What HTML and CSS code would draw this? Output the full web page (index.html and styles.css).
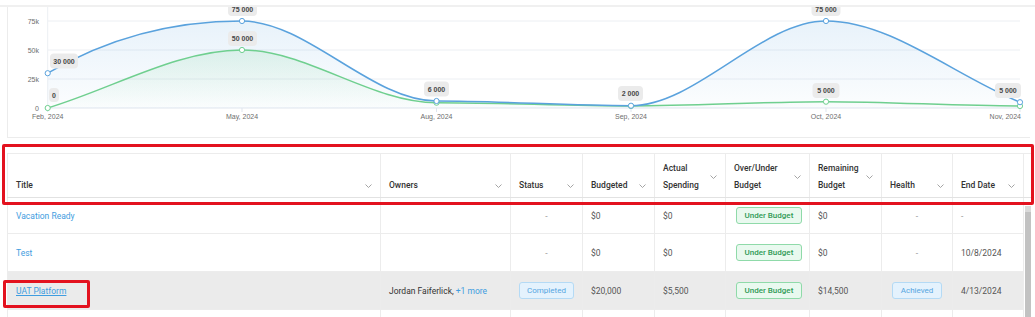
FILE: index.html
```html
<!DOCTYPE html>
<html lang="en">
<head>
    <meta charset="UTF-8">
    <title>Projects Budget</title>
    <link rel="stylesheet" href="styles.css">
</head>
<body>
    <div class="top-strip"></div>

    <!-- Budget vs spending chart -->
    <div class="chart-card">
        <svg class="chart" width="1022" height="130" viewBox="8 7 1022 130">
            <defs>
                <linearGradient id="fillBlue" x1="0" y1="0" x2="0" y2="1">
                    <stop offset="0" stop-color="#5aa2dd" stop-opacity="0.14"/>
                    <stop offset="1" stop-color="#5aa2dd" stop-opacity="0.02"/>
                </linearGradient>
                <linearGradient id="fillGreen" x1="0" y1="0" x2="0" y2="1">
                    <stop offset="0" stop-color="#6fcf8f" stop-opacity="0.16"/>
                    <stop offset="1" stop-color="#6fcf8f" stop-opacity="0.01"/>
                </linearGradient>
            </defs>

            <g class="grid">
                <line x1="47.7" y1="21" x2="1020" y2="21"/>
                <line x1="47.7" y1="50" x2="1020" y2="50"/>
                <line x1="47.7" y1="79" x2="1020" y2="79"/>
                <line x1="47.7" y1="7" x2="47.7" y2="108"/>
            </g>
            <g class="axis">
                <line x1="47.7" y1="108" x2="1020" y2="108"/>
                <line x1="47.7" y1="108" x2="47.7" y2="112"/>
                <line x1="242" y1="108" x2="242" y2="112"/>
                <line x1="436.5" y1="108" x2="436.5" y2="112"/>
                <line x1="631" y1="108" x2="631" y2="112"/>
                <line x1="826" y1="108" x2="826" y2="112"/>
                <line x1="1020" y1="108" x2="1020" y2="112"/>
            </g>

            <g class="y-labels">
                <text x="39" y="23.5">75k</text>
                <text x="39" y="52.5">50k</text>
                <text x="39" y="81.5">25k</text>
                <text x="39" y="110.5">0</text>
            </g>
            <g class="x-labels">
                <text x="47.7" y="119">Feb, 2024</text>
                <text x="242" y="119">May, 2024</text>
                <text x="436.5" y="119">Aug, 2024</text>
                <text x="631" y="119">Sep, 2024</text>
                <text x="826" y="119">Oct, 2024</text>
                <text class="last" x="1021" y="119">Nov, 2024</text>
            </g>

            <path fill="url(#fillBlue)" d="M47.7,73.2 C112.5,35 177.2,21 242,21 C306.8,21 371.7,101 436.5,101 C501.3,101 566.2,105.7 631,105.7 C695.8,105.7 761.2,21 826,21 C890.7,21 955.3,76 1020,102.2 L1020,108 L47.7,108 Z"/>
            <path fill="url(#fillGreen)" d="M47.7,108 C112.5,88.6 177.2,50 242,50 C306.8,50 371.7,102.7 436.5,102.7 C501.3,102.7 566.2,106 631,106 C695.8,106 761.2,101.7 826,101.7 C890.7,101.7 955.3,106 1020,106 L1020,108 L47.7,108 Z"/>

            <path class="line-green" d="M47.7,108 C112.5,88.6 177.2,50 242,50 C306.8,50 371.7,102.7 436.5,102.7 C501.3,102.7 566.2,106 631,106 C695.8,106 761.2,101.7 826,101.7 C890.7,101.7 955.3,106 1020,106"/>
            <path class="line-blue" d="M47.7,73.2 C112.5,35 177.2,21 242,21 C306.8,21 371.7,101 436.5,101 C501.3,101 566.2,105.7 631,105.7 C695.8,105.7 761.2,21 826,21 C890.7,21 955.3,76 1020,102.2"/>

            <g class="dots-green">
                <circle cx="47.7" cy="108" r="2.6"/>
                <circle cx="242" cy="50" r="2.6"/>
                <circle cx="436.5" cy="102.7" r="2.6"/>
                <circle cx="631" cy="106" r="2.6"/>
                <circle cx="826" cy="101.7" r="2.6"/>
                <circle cx="1020" cy="106" r="2.6"/>
            </g>
            <g class="dots-blue">
                <circle cx="47.7" cy="73.2" r="2.6"/>
                <circle cx="242" cy="21" r="2.6"/>
                <circle cx="436.5" cy="101" r="2.6"/>
                <circle cx="631" cy="105.7" r="2.6"/>
                <circle cx="826" cy="21" r="2.6"/>
                <circle cx="1020" cy="102.2" r="2.6"/>
            </g>

            <!-- data labels -->
            <g class="bubbles">
                <rect x="50" y="53.5" width="28" height="15" rx="4"/>
                <rect x="49" y="88" width="10" height="14" rx="4"/>
                <rect x="228" y="1" width="29" height="15" rx="4"/>
                <rect x="228" y="31" width="29" height="15" rx="4"/>
                <rect x="424" y="81.5" width="25" height="15" rx="4"/>
                <rect x="618" y="86" width="25" height="15" rx="4"/>
                <rect x="811.5" y="1" width="29" height="15" rx="4"/>
                <rect x="812.5" y="83" width="27" height="15" rx="4"/>
                <rect x="995" y="83" width="26" height="15" rx="4"/>
            </g>
            <g class="bubble-text">
                <text x="64" y="63.5">30 000</text>
                <text x="54" y="97.5">0</text>
                <text x="242.5" y="12">75 000</text>
                <text x="242.5" y="41">50 000</text>
                <text x="436.5" y="91.5">6 000</text>
                <text x="630.5" y="96">2 000</text>
                <text x="826" y="12">75 000</text>
                <text x="826" y="93">5 000</text>
                <text x="1008" y="93">5 000</text>
            </g>
        </svg>
    </div>

    <!-- Projects table -->
    <div class="table-panel">
        <div class="grid-head">
            <div class="th"><div class="th-inner"><span class="th-label">Title</span><svg class="chev" viewBox="0 0 7 4"><polyline points="0.5,0.5 3.5,3.5 6.5,0.5"/></svg></div></div>
            <div class="th"><div class="th-inner"><span class="th-label">Owners</span><svg class="chev" viewBox="0 0 7 4"><polyline points="0.5,0.5 3.5,3.5 6.5,0.5"/></svg></div></div>
            <div class="th"><div class="th-inner"><span class="th-label">Status</span><svg class="chev" viewBox="0 0 7 4"><polyline points="0.5,0.5 3.5,3.5 6.5,0.5"/></svg></div></div>
            <div class="th"><div class="th-inner"><span class="th-label">Budgeted</span><svg class="chev" viewBox="0 0 7 4"><polyline points="0.5,0.5 3.5,3.5 6.5,0.5"/></svg></div></div>
            <div class="th"><div class="th-inner"><span class="th-label">Actual Spending</span><svg class="chev" viewBox="0 0 7 4"><polyline points="0.5,0.5 3.5,3.5 6.5,0.5"/></svg></div></div>
            <div class="th"><div class="th-inner"><span class="th-label">Over/Under Budget</span><svg class="chev" viewBox="0 0 7 4"><polyline points="0.5,0.5 3.5,3.5 6.5,0.5"/></svg></div></div>
            <div class="th"><div class="th-inner"><span class="th-label">Remaining Budget</span><svg class="chev" viewBox="0 0 7 4"><polyline points="0.5,0.5 3.5,3.5 6.5,0.5"/></svg></div></div>
            <div class="th"><div class="th-inner"><span class="th-label">Health</span><svg class="chev" viewBox="0 0 7 4"><polyline points="0.5,0.5 3.5,3.5 6.5,0.5"/></svg></div></div>
            <div class="th"><div class="th-inner"><span class="th-label">End Date</span><svg class="chev" viewBox="0 0 7 4"><polyline points="0.5,0.5 3.5,3.5 6.5,0.5"/></svg></div></div>
            <div class="th-spacer"></div>
        </div>

        <div class="body-wrap">
            <div class="grid-body">
                <div class="row first">
                    <div class="td"><a class="link">Vacation Ready</a></div>
                    <div class="td"></div>
                    <div class="td center muted">-</div>
                    <div class="td">$0</div>
                    <div class="td">$0</div>
                    <div class="td"><span class="badge green">Under Budget</span></div>
                    <div class="td">$0</div>
                    <div class="td center muted">-</div>
                    <div class="td muted">-</div>
                </div>
                <div class="row">
                    <div class="td"><a class="link">Test</a></div>
                    <div class="td"></div>
                    <div class="td center muted">-</div>
                    <div class="td">$0</div>
                    <div class="td">$0</div>
                    <div class="td"><span class="badge green">Under Budget</span></div>
                    <div class="td">$0</div>
                    <div class="td center muted">-</div>
                    <div class="td">10/8/2024</div>
                </div>
                <div class="row hover">
                    <div class="td"><a class="link underline">UAT Platform</a></div>
                    <div class="td owner">Jordan Faiferlick,&nbsp;<a class="link">+1 more</a></div>
                    <div class="td center"><span class="badge blue">Completed</span></div>
                    <div class="td">$20,000</div>
                    <div class="td">$5,500</div>
                    <div class="td"><span class="badge green">Under Budget</span></div>
                    <div class="td">$14,500</div>
                    <div class="td center"><span class="badge blue">Achieved</span></div>
                    <div class="td">4/13/2024</div>
                </div>
                <div class="row">
                    <div class="td"></div>
                    <div class="td"></div>
                    <div class="td"></div>
                    <div class="td"></div>
                    <div class="td"></div>
                    <div class="td"></div>
                    <div class="td"></div>
                    <div class="td"></div>
                    <div class="td"></div>
                </div>
            </div>
            <div class="scrollbar">
                <div class="scroll-cap"></div>
                <div class="scroll-thumb"></div>
            </div>
        </div>

        <!-- review highlights -->
        <div class="mark mark-head"></div>
        <div class="mark mark-title"></div>
    </div>
</body>
</html>
```

FILE: styles.css
```css
* {
    margin: 0;
    padding: 0;
    box-sizing: border-box;
}
html, body {
    overflow: hidden;
}
body {
    background: #fff;
    font-family: Roboto, "Liberation Sans", Arial, sans-serif;
    font-size: 8.5px;
    color: #444;
}

.top-strip {
    height: 2px;
    margin-top: 5px;
    background: #f0f0f0;
}

/* Chart */
.chart-card {
    margin-left: 7px;
    width: 1023px;
    height: 131px;
    border-left: 1px solid #ececec;
    border-bottom: 1px solid #ececec;
    overflow: hidden;
}
.chart {
    display: block;
    font-family: "Liberation Sans", Arial, sans-serif;
}
.grid line {
    stroke: #eceff3;
    stroke-width: 1;
}
.axis line {
    stroke: #dfe5ee;
    stroke-width: 1;
}
.y-labels text {
    font-size: 7px;
    fill: #6e6e6e;
    text-anchor: end;
}
.x-labels text {
    font-size: 7px;
    fill: #6e6e6e;
    text-anchor: middle;
}
.x-labels text.last {
    text-anchor: end;
}
.line-blue, .line-green {
    fill: none;
    stroke-width: 1.5;
}
.line-blue { stroke: #5aa2dd; }
.line-green { stroke: #6fcf8f; }
.dots-blue circle {
    fill: #fff;
    stroke: #5aa2dd;
    stroke-width: 1;
}
.dots-green circle {
    fill: #fff;
    stroke: #6fcf8f;
    stroke-width: 1;
}
.bubbles rect {
    fill: #ebebeb;
}
.bubble-text text {
    font-size: 7px;
    font-weight: bold;
    fill: #474747;
    text-anchor: middle;
}

/* Table */
.table-panel {
    position: relative;
    margin: 15px 0 0 7px;
    width: 1024px;
}
.grid-head,
.row {
    display: grid;
    grid-template-columns: 374px 130px 72px 72px 71px 84px 72px 71px 71px;
}
.grid-head {
    grid-template-columns: 374px 130px 72px 72px 71px 84px 72px 71px 71px 1fr;
    height: 45px;
    border-top: 1px solid #ececec;
    border-bottom: 1px solid #e2e2e2;
}
.th {
    display: flex;
    align-items: flex-end;
    padding: 0 8px 3px 8px;
    border-right: 1px solid #ececec;
    font-weight: 500;
    color: #333;
}
.th:first-child,
.td:first-child {
    border-left: 1px solid #ececec;
}
.th-inner {
    display: flex;
    align-items: center;
    width: 100%;
}
.th-label {
    flex: 1;
    line-height: 17px;
}
.chev {
    flex: none;
    width: 7px;
    height: 4px;
    margin-left: 4px;
}
.chev polyline {
    fill: none;
    stroke: #9a9a9a;
    stroke-width: 0.9;
}

.body-wrap {
    display: flex;
}
.grid-body {
    width: 1017px;
}
.row {
    height: 38px;
}
.row.first {
    height: 36px;
}
.row.hover {
    background: #ebebeb;
}
.td {
    display: flex;
    align-items: center;
    padding: 0 8px;
    border-right: 1px solid #ececec;
    border-bottom: 1px solid #ececec;
    color: #555;
    white-space: nowrap;
}
.td.center {
    justify-content: center;
}
.td.muted {
    color: #999;
}
.td.owner {
    color: #333;
}
.link {
    color: #3f9de0;
    cursor: pointer;
}
.link.underline {
    text-decoration: underline;
}

.badge {
    display: inline-block;
    font-size: 8px;
    line-height: 15px;
    padding: 0 7.5px;
    border-radius: 3px;
    border: 1px solid;
}
.badge.green {
    background: #e9f9ef;
    border-color: #8fdaa9;
    color: #2f9a56;
    font-weight: 500;
    margin-left: 2px;
}
.badge.blue {
    background: #e4f2fd;
    border-color: #b4daf5;
    color: #55a5e0;
}

.scrollbar {
    width: 7px;
    margin-left: 1px;
    padding-top: 8px;
}
.scroll-cap {
    height: 6px;
    background: #dadada;
}
.scroll-thumb {
    height: 200px;
    background: #c2c2c2;
}

/* Red review boxes drawn over the table */
.mark {
    position: absolute;
    border: 3px solid #e3121f;
    border-radius: 2px;
}
.mark-head {
    left: -5px;
    top: -9px;
    width: 1032px;
    height: 61px;
}
.mark-title {
    left: -4px;
    top: 127px;
    width: 87px;
    height: 28px;
}
```
